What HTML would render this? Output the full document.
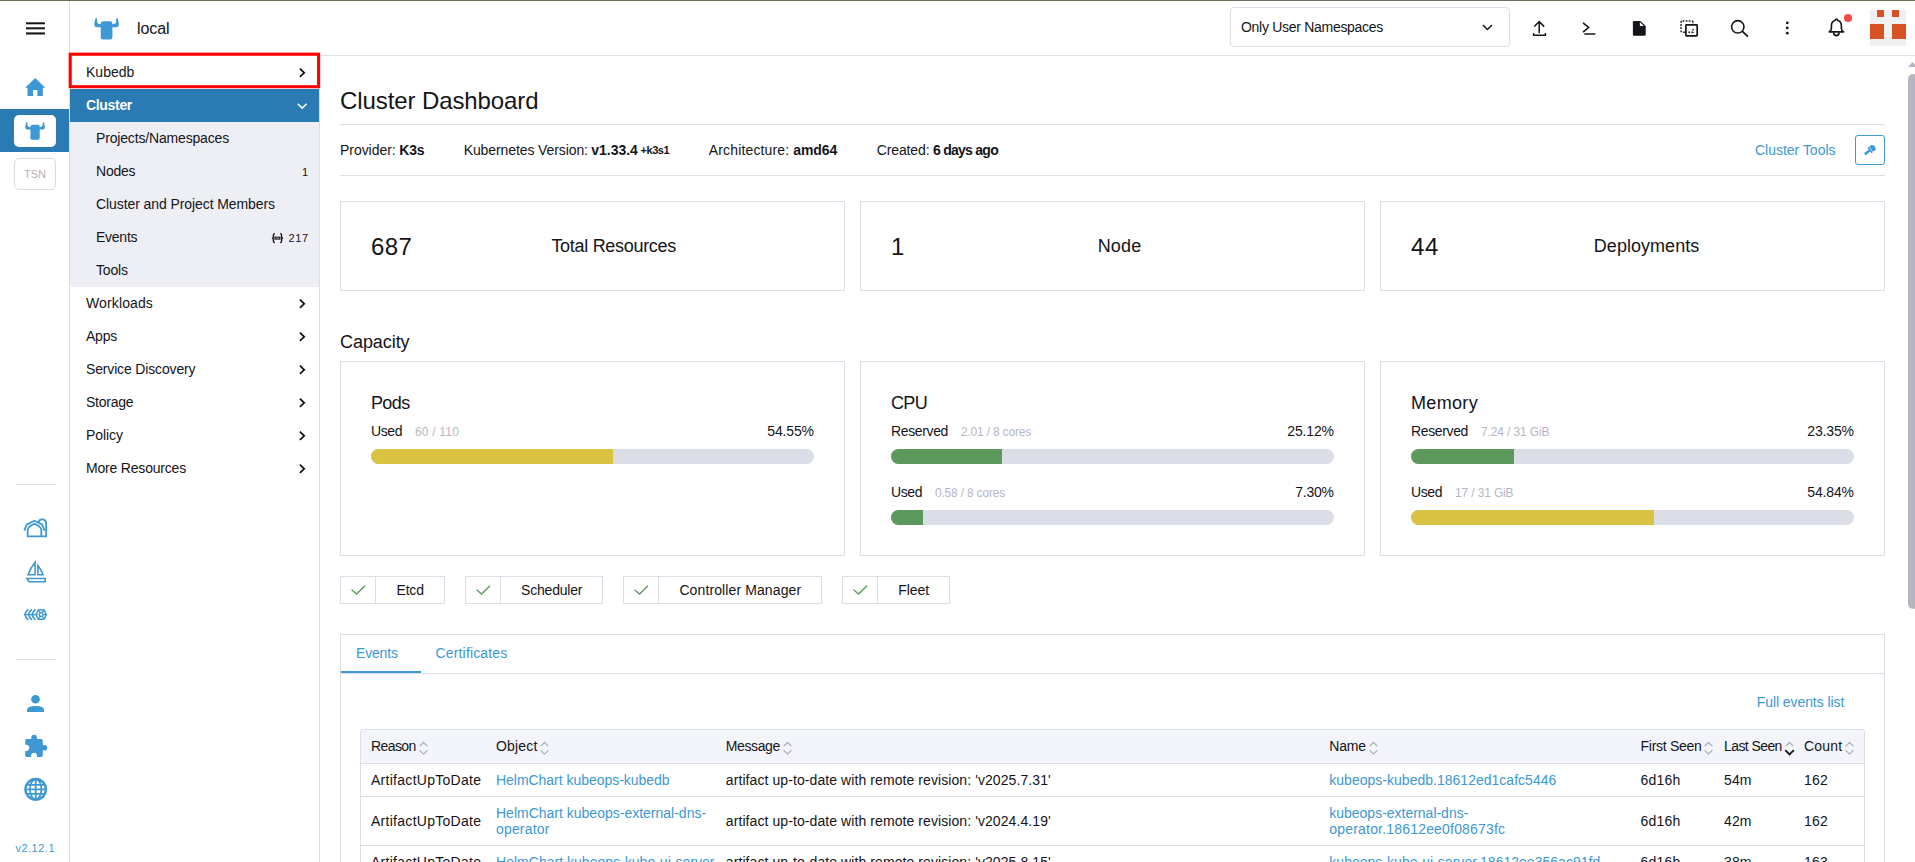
<!DOCTYPE html>
<html lang="en">
<head>
<meta charset="utf-8">
<title>Rancher - local - Cluster Dashboard</title>
<style>
html,body{margin:0;padding:0;background:#fff;}
body{width:1915px;height:862px;overflow:hidden;font-family:"Liberation Sans",sans-serif;color:#141419;}
#app{position:relative;width:1915px;height:862px;overflow:hidden;background:#fff;}
.a{position:absolute;box-sizing:border-box;}
.t{position:absolute;white-space:pre;line-height:1;margin:0;padding:0;font-weight:400;}
a.t{color:inherit;text-decoration:none;}
.card{position:absolute;box-sizing:border-box;border:1px solid #dcdee7;background:#fff;}
.bar{position:absolute;height:15px;border-radius:8px;background:#dcdee7;overflow:hidden;}
.bar i{position:absolute;left:0;top:0;bottom:0;display:block;}
.hr{position:absolute;height:1px;background:#dcdee7;}
.vr{position:absolute;width:1px;background:#dcdee7;}
svg{position:absolute;overflow:visible;}
</style>
</head>
<body>
<div id="app">
<div class="a" style="left:0;top:0;width:1915px;height:1px;background:#6b6c5a"></div>
<aside aria-label="Main menu">
<div class="vr" style="left:69px;top:1px;height:861px"></div>
<svg style="left:0;top:0" width="60" height="50"><g fill="#141419"><rect x="26" y="22.3" width="18.9" height="2"/><rect x="26" y="27.3" width="18.9" height="2"/><rect x="26" y="32.4" width="18.9" height="2.1"/></g></svg>
<svg style="left:25.3px;top:77.6px" width="20.4" height="18.1" viewBox="0 0 20 18"><path fill="#3d98d3" d="M10 0 L20 9.6 L17.6 9.6 L17.6 18 L12.2 18 L12.2 12 L7.8 12 L7.8 18 L2.4 18 L2.4 9.6 L0 9.6 Z"/></svg>
<div class="a" style="left:0;top:109px;width:69px;height:42.5px;background:#2a7bb3"></div>
<div class="a" style="left:14px;top:115px;width:42px;height:32px;background:#fff;border-radius:5px"></div>
<svg style="left:24.9px;top:122px" width="20.1" height="17.8" viewBox="0 0 25.3 21.6" preserveAspectRatio="none"><path fill="#3d98d3" d="M1.6 0 L3 0.5 L3.1 4 Q3.3 6 6.8 6.3 L6.8 5.6 Q6.8 3.2 9.3 3.2 L16 3.2 Q18.5 3.2 18.5 5.6 L18.5 6.3 Q22 6 22.2 4 L22.3 0.5 L23.7 0 Q25 4 25 6.8 Q25 9.2 22.6 9.2 L18.5 9.2 L18.5 19.4 Q18.5 21.6 16.3 21.6 L9 21.6 Q6.8 21.6 6.8 19.4 L6.8 9.2 L2.7 9.2 Q0.3 9.2 0.3 6.8 Q0.3 4 1.6 0 Z"/></svg>
<div class="a" style="left:14px;top:158px;width:42px;height:32px;border:1px solid #dcdcdc;border-radius:5px"></div>
<span class="t" style="top:168.69px;font-size:11px;left:24.00px;color:#b4b4b4;">TSN</span>
<div class="hr" style="left:16px;top:484px;width:40px"></div>
<div class="hr" style="left:16px;top:659px;width:40px"></div>
<svg style="left:20px;top:512px" width="32" height="32" viewBox="0 0 32 32" fill="none" stroke="#3d98d3" stroke-width="1.8" stroke-linejoin="round" stroke-linecap="round"><path d="M18.5 10 A3.9 3.9 0 0 1 26.1 11.2 L26.1 24.4 L7.7 24.4 L7.7 17.6 Q8.6 13.8 14.5 11.8 Q20.4 13.8 21.3 17.6 L21.3 24.4"/><path d="M4.5 18 L6.9 12.4 L14.5 8.8 L22 12.4 L24.3 18"/></svg>
<svg style="left:20px;top:555px" width="32" height="32" viewBox="0 0 32 32" fill="none" stroke="#3d98d3" stroke-width="1.6" stroke-linejoin="miter"><path d="M15.1 7.3 L15.1 19.8 L8.1 19.8 Q10.6 12.6 15.1 7.3 Z"/><path d="M17.9 10.6 L17.9 19.8 L23 19.8 Q21.4 15 17.9 10.6 Z"/><path d="M6.9 23.5 L25.2 23.5 L25.2 26.8 L9 26.8 Z"/></svg>
<svg style="left:24.2px;top:608.8px" width="23.1" height="11.2" viewBox="0 0 23.1 11.2" fill="none" stroke="#3d98d3" stroke-width="1.7" stroke-linecap="round" stroke-linejoin="round"><path d="M3.7 0.9 Q1.9 2.2 0.9 5.6 Q1.9 9 3.7 10.3 M7.3 0.9 Q5.5 2.2 4.5 5.6 Q5.5 9 7.3 10.3 M10.9 0.9 Q9.1 2.2 8.1 5.6 Q9.1 9 10.9 10.3"/><path stroke-width="1.4" d="M0.9 5.6 L13 5.6"/><path stroke-width="1.5" d="M14.4 0.9 L20 0.9 L22.3 5.6 L20 10.3 L14.4 10.3 L12 5.6 Z"/><circle cx="17.2" cy="5.6" r="1.9" stroke-width="1.3"/><path stroke-width="1.2" d="M14.4 0.9 L16.2 3.9 M20 0.9 L18.2 3.9 M14.4 10.3 L16.2 7.3 M20 10.3 L18.2 7.3 M19.2 5.6 L22.3 5.6"/></svg>
<svg style="left:27px;top:695px" width="17" height="17" viewBox="0 0 17 17"><circle cx="8.5" cy="4.3" r="4.3" fill="#3d98d3"/><path fill="#3d98d3" d="M0 17 L0 15 Q0 11 8.5 11 Q17 11 17 15 L17 17 Z"/></svg>
<svg style="left:20px;top:730px" width="32" height="32" viewBox="0 0 32 32"><g fill="#3d98d3"><rect x="5.2" y="8.9" width="17.6" height="18" rx="1.7"/><circle cx="14.1" cy="7.5" r="2.8"/><rect x="11.9" y="7.5" width="4.4" height="2"/><circle cx="24.4" cy="17.8" r="2.8"/><rect x="22" y="15.6" width="2.4" height="4.4"/></g><g fill="#ffffff"><circle cx="6.2" cy="17.8" r="3.1"/><rect x="4.8" y="14.7" width="1.4" height="6.2"/><circle cx="14.1" cy="25.6" r="2.9"/><rect x="11.2" y="25.6" width="5.8" height="1.6"/></g></svg>
<svg style="left:20px;top:773px" width="32" height="32" viewBox="0 0 32 32" fill="none" stroke="#3d98d3"><circle cx="15.7" cy="16.3" r="10.25" stroke-width="2.4"/><ellipse cx="15.7" cy="16.3" rx="5.7" ry="10.2" stroke-width="1.8"/><path stroke-width="1.8" d="M15.7 6 L15.7 26.6 M5.6 16.3 L25.8 16.3 M6.6 11.8 L24.8 11.8 M6.6 20.9 L24.8 20.9"/></svg>
<a href="#" class="t" style="top:842.59px;font-size:11px;left:15.45px;letter-spacing:0.501px;color:#3d98d3;">v2.12.1</a>
</aside>
<header>
<div class="hr" style="left:70px;top:55px;width:1845px"></div>
<svg style="left:93.8px;top:17.6px" width="25.2" height="21.5" viewBox="0 0 25.3 21.6" preserveAspectRatio="none"><path fill="#3d98d3" d="M1.6 0 L3 0.5 L3.1 4 Q3.3 6 6.8 6.3 L6.8 5.6 Q6.8 3.2 9.3 3.2 L16 3.2 Q18.5 3.2 18.5 5.6 L18.5 6.3 Q22 6 22.2 4 L22.3 0.5 L23.7 0 Q25 4 25 6.8 Q25 9.2 22.6 9.2 L18.5 9.2 L18.5 19.4 Q18.5 21.6 16.3 21.6 L9 21.6 Q6.8 21.6 6.8 19.4 L6.8 9.2 L2.7 9.2 Q0.3 9.2 0.3 6.8 Q0.3 4 1.6 0 Z"/></svg>
<span class="t" style="top:21.16px;font-size:16px;left:137.00px;letter-spacing:-0.061px;">local</span>
<div class="a" style="left:1230px;top:7px;width:280px;height:40px;border:1px solid #dcdee7;border-radius:4px"></div>
<span class="t" style="top:20.15px;font-size:14px;left:1241.00px;letter-spacing:-0.291px;">Only User Namespaces</span>
<svg style="left:1481.6px;top:23.7px" width="10.9" height="6.5" viewBox="0 0 12 7" fill="none" stroke="#141419" stroke-width="1.7"><path d="M1 1 L6 6 L11 1"/></svg>
<svg style="left:1530px;top:18px" width="20" height="20" viewBox="0 0 20 20" fill="none" stroke="#141419" stroke-width="1.5"><path d="M9.2 15.2 L9.2 4 M4.3 8.6 L9.2 3.6 L14.2 8.6 M3.6 15 L3.6 17.2 L15.4 17.2 L15.4 15"/></svg>
<svg style="left:1580px;top:18px" width="20" height="20" viewBox="0 0 20 20" fill="none" stroke="#141419" stroke-width="1.6"><path d="M3 4.8 L8.6 9.5 L3 14.2"/><path stroke-width="1.5" d="M4.3 16 L15.3 16"/></svg>
<svg style="left:1630px;top:18px" width="20" height="20" viewBox="0 0 20 20"><path fill="#141419" d="M4.1 3 L10.2 3 L15.7 8 L15.7 16.5 Q15.7 17.7 14.5 17.7 L4.1 17.7 Q2.9 17.7 2.9 16.5 L2.9 4.2 Q2.9 3 4.1 3 Z"/><path fill="#ffffff" d="M9.9 4.3 L9.9 7.9 L13.9 7.9 Z"/></svg>
<svg style="left:1678px;top:18px" width="22" height="20" viewBox="0 0 22 20" fill="none" stroke="#141419"><rect x="3" y="2.9" width="12" height="11.3" rx="1.6" stroke-width="1.5" stroke-dasharray="1.7 1.4"/><rect x="7.9" y="6.8" width="11.3" height="11" rx="0.6" stroke-width="1.7" fill="#ffffff"/><path stroke-width="1.4" stroke-dasharray="1.6 1.5" d="M10.4 14.2 L15 14.2 L15 10"/></svg>
<svg style="left:1728px;top:18px" width="22" height="20" viewBox="0 0 22 20" fill="none" stroke="#141419" stroke-width="1.6"><circle cx="9.8" cy="8.85" r="6.2"/><path stroke-width="1.7" d="M14.2 13.1 L19.9 18.7"/></svg>
<svg style="left:1785px;top:20px" width="5" height="16" viewBox="0 0 5 16"><circle cx="2.3" cy="2.9" r="1.35" fill="#141419"/><circle cx="2.3" cy="7.9" r="1.35" fill="#141419"/><circle cx="2.3" cy="13.2" r="1.35" fill="#141419"/></svg>
<svg style="left:1827.9px;top:18.4px" width="16.8" height="18.6" viewBox="0 0 16.8 18.6" fill="none" stroke="#141419" stroke-width="1.6" stroke-linejoin="round"><path d="M8.4 1 Q9.4 1 9.6 2.3 Q13.4 3.4 13.4 8 L13.4 10.6 Q13.6 12.4 15.6 13.9 L1.2 13.9 Q3.2 12.4 3.4 10.6 L3.4 8 Q3.4 3.4 7.2 2.3 Q7.4 1 8.4 1 Z"/><path d="M5.6 14.4 Q5.8 17.6 8.4 17.6 Q11 17.6 11.2 14.4"/></svg>
<div class="a" style="left:1844px;top:14px;width:8px;height:8px;border-radius:4px;background:#f64747"></div>
<div class="a" style="left:1870px;top:10px;width:36px;height:36px;background:#f0f0f0"></div>
<div class="a" style="left:1877.2px;top:10px;width:7.2px;height:7.2px;background:#d65224"></div>
<div class="a" style="left:1891.6px;top:10px;width:7.2px;height:7.2px;background:#d65224"></div>
<div class="a" style="left:1870px;top:24.4px;width:14.4px;height:14.4px;background:#d65224"></div>
<div class="a" style="left:1891.6px;top:24.4px;width:14.4px;height:14.4px;background:#d65224"></div>
</header>
<nav aria-label="Cluster navigation">
<div class="vr" style="left:319px;top:56px;height:806px"></div>
<div class="a" style="left:70px;top:88.5px;width:249px;height:33px;background:#2a7bb3"></div>
<div class="a" style="left:70px;top:121.5px;width:249px;height:165px;background:#eeeff4"></div>
<svg style="left:0;top:0" width="330" height="95"><rect x="70.2" y="54.2" width="248.4" height="32.5" fill="none" stroke="#ff0000" stroke-width="3.1"/></svg>
<a href="#" class="t" style="top:65.15px;font-size:14px;left:86.00px;letter-spacing:0.020px;">Kubedb</a>
<a href="#" class="t" style="top:98.15px;font-size:14px;left:86.00px;letter-spacing:-0.319px;font-weight:700;color:#ffffff;">Cluster</a>
<a href="#" class="t" style="top:131.15px;font-size:14px;left:96.00px;letter-spacing:-0.167px;">Projects/Namespaces</a>
<a href="#" class="t" style="top:164.15px;font-size:14px;left:96.00px;letter-spacing:-0.214px;">Nodes</a>
<span class="t" style="top:166.59px;font-size:11px;left:301.88px;letter-spacing:-0.132px;">1</span>
<a href="#" class="t" style="top:197.15px;font-size:14px;left:96.00px;letter-spacing:-0.085px;">Cluster and Project Members</a>
<a href="#" class="t" style="top:230.15px;font-size:14px;left:96.00px;letter-spacing:-0.252px;">Events</a>
<span class="t" style="top:232.59px;font-size:11px;left:288.54px;letter-spacing:0.600px;">217</span>
<svg style="left:270.6px;top:232.7px" width="13" height="10.3" viewBox="0 0 11.9 10.1" preserveAspectRatio="none" fill="none" stroke="#141419" stroke-width="1.25"><path d="M3.6 0.6 Q2.2 0.6 2.2 2 L2.2 3.9 Q2.2 5.05 0.8 5.05 Q2.2 5.05 2.2 6.2 L2.2 8.1 Q2.2 9.5 3.6 9.5 M8.3 0.6 Q9.7 0.6 9.7 2 L9.7 3.9 Q9.7 5.05 11.1 5.05 Q9.7 5.05 9.7 6.2 L9.7 8.1 Q9.7 9.5 8.3 9.5"/><rect x="3.7" y="4.15" width="4.5" height="1.8" stroke-width="1.1"/></svg>
<a href="#" class="t" style="top:263.15px;font-size:14px;left:96.00px;letter-spacing:-0.177px;">Tools</a>
<a href="#" class="t" style="top:296.15px;font-size:14px;left:86.00px;letter-spacing:0.123px;">Workloads</a>
<a href="#" class="t" style="top:329.15px;font-size:14px;left:86.00px;letter-spacing:-0.230px;">Apps</a>
<a href="#" class="t" style="top:362.15px;font-size:14px;left:86.00px;letter-spacing:-0.155px;">Service Discovery</a>
<a href="#" class="t" style="top:395.15px;font-size:14px;left:86.00px;letter-spacing:-0.235px;">Storage</a>
<a href="#" class="t" style="top:428.15px;font-size:14px;left:86.00px;letter-spacing:-0.060px;">Policy</a>
<a href="#" class="t" style="top:461.15px;font-size:14px;left:86.00px;letter-spacing:-0.193px;">More Resources</a>
<svg style="left:298.6px;top:68.4px" width="6.4" height="9.6" viewBox="0 0 6.4 9.6" fill="none" stroke="#141419" stroke-width="1.8"><path d="M0.9 0.7 L5.2 4.8 L0.9 8.9"/></svg>
<svg style="left:298.6px;top:299.4px" width="6.4" height="9.6" viewBox="0 0 6.4 9.6" fill="none" stroke="#141419" stroke-width="1.8"><path d="M0.9 0.7 L5.2 4.8 L0.9 8.9"/></svg>
<svg style="left:298.6px;top:332.4px" width="6.4" height="9.6" viewBox="0 0 6.4 9.6" fill="none" stroke="#141419" stroke-width="1.8"><path d="M0.9 0.7 L5.2 4.8 L0.9 8.9"/></svg>
<svg style="left:298.6px;top:365.4px" width="6.4" height="9.6" viewBox="0 0 6.4 9.6" fill="none" stroke="#141419" stroke-width="1.8"><path d="M0.9 0.7 L5.2 4.8 L0.9 8.9"/></svg>
<svg style="left:298.6px;top:398.4px" width="6.4" height="9.6" viewBox="0 0 6.4 9.6" fill="none" stroke="#141419" stroke-width="1.8"><path d="M0.9 0.7 L5.2 4.8 L0.9 8.9"/></svg>
<svg style="left:298.6px;top:431.4px" width="6.4" height="9.6" viewBox="0 0 6.4 9.6" fill="none" stroke="#141419" stroke-width="1.8"><path d="M0.9 0.7 L5.2 4.8 L0.9 8.9"/></svg>
<svg style="left:298.6px;top:464.4px" width="6.4" height="9.6" viewBox="0 0 6.4 9.6" fill="none" stroke="#141419" stroke-width="1.8"><path d="M0.9 0.7 L5.2 4.8 L0.9 8.9"/></svg>
<svg style="left:296.7px;top:102.9px" width="10.4" height="6.2" viewBox="0 0 10.4 6.2" fill="none" stroke="#ffffff" stroke-width="1.5"><path d="M0.7 0.7 L5.2 5.1 L9.7 0.7"/></svg>
</nav>
<main>
<h1 class="t" style="top:88.98px;font-size:24px;left:340.00px;letter-spacing:-0.095px;">Cluster Dashboard</h1>
<div class="hr" style="left:340px;top:124px;width:1545px"></div>
<span class="t" style="top:142.95px;font-size:14px;left:340.00px;letter-spacing:-0.042px;">Provider: </span>
<span class="t" style="top:142.95px;font-size:14px;left:399.30px;letter-spacing:-0.229px;font-weight:700;">K3s</span>
<span class="t" style="top:142.95px;font-size:14px;left:463.70px;letter-spacing:-0.099px;">Kubernetes Version: </span>
<span class="t" style="top:142.95px;font-size:14px;left:591.30px;letter-spacing:-0.017px;font-weight:700;">v1.33.4</span>
<span class="t" style="top:145.49px;font-size:11px;left:640.60px;letter-spacing:-0.461px;font-weight:700;">+k3s1</span>
<span class="t" style="top:142.95px;font-size:14px;left:708.80px;letter-spacing:0.144px;">Architecture: </span>
<span class="t" style="top:142.95px;font-size:14px;left:793.20px;letter-spacing:-0.072px;font-weight:700;">amd64</span>
<span class="t" style="top:142.95px;font-size:14px;left:876.80px;letter-spacing:-0.133px;">Created: </span>
<span class="t" style="top:142.95px;font-size:14px;left:933.00px;letter-spacing:-0.738px;font-weight:700;">6 days ago</span>
<div class="hr" style="left:340px;top:175px;width:1545px"></div>
<a href="#" class="t" style="top:142.95px;font-size:14px;left:1755.00px;letter-spacing:-0.013px;color:#3d98d3;">Cluster Tools</a>
<div class="a" style="left:1855px;top:135px;width:30px;height:30px;border:1px solid #3d98d3;border-radius:3px"></div>
<svg style="left:1855px;top:135px" width="30" height="30" viewBox="0 0 30 30"><g fill="#3d98d3" transform="translate(10.7 18.5) rotate(-38)"><path d="M0.3 -1.5 Q-1.4 -1.5 -1.4 0 Q-1.4 1.5 0.3 1.5 L5 1 L5 -1 Z"/><rect x="4.7" y="-3.3" width="1.7" height="6.6"/><path d="M6.9 -3.3 L9.6 -3.3 Q10.4 -1.6 12 -1.2 Q10.8 1.4 10.6 3.3 L6.9 3.3 Z"/></g></svg>
<section aria-label="Resource counts">
<div class="card" style="left:340px;top:201px;width:505px;height:90px"></div>
<span class="t" style="top:234.98px;font-size:24px;left:371.00px;letter-spacing:0.418px;">687</span>
<span class="t" style="top:236.76px;font-size:18px;left:551.40px;letter-spacing:-0.298px;">Total Resources</span>
<div class="card" style="left:860px;top:201px;width:505px;height:90px"></div>
<span class="t" style="top:234.98px;font-size:24px;left:891.00px;letter-spacing:-0.288px;">1</span>
<span class="t" style="top:236.76px;font-size:18px;left:1097.70px;letter-spacing:0.142px;">Node</span>
<div class="card" style="left:1380px;top:201px;width:505px;height:90px"></div>
<span class="t" style="top:234.98px;font-size:24px;left:1411.00px;letter-spacing:0.600px;">44</span>
<span class="t" style="top:236.76px;font-size:18px;left:1593.80px;letter-spacing:0.041px;">Deployments</span>
</section>
<section aria-label="Capacity">
<h2 class="t" style="top:332.76px;font-size:18px;left:340.00px;letter-spacing:-0.066px;">Capacity</h2>
<div class="card" style="left:340px;top:361px;width:505px;height:195px"></div>
<h3 class="t" style="top:394.16px;font-size:18px;left:371.00px;letter-spacing:-0.633px;">Pods</h3>
<span class="t" style="top:424.15px;font-size:14px;left:371.00px;letter-spacing:-0.422px;">Used</span>
<span class="t" style="top:425.84px;font-size:12px;left:415.00px;letter-spacing:0.189px;color:#b6b6c2;">60 / 110</span>
<span class="t" style="top:424.15px;font-size:14px;left:767.34px;letter-spacing:-0.164px;">54.55%</span>
<div class="bar" style="left:371px;top:449px;width:443px"><i style="width:241.7px;background:#dac342"></i></div>
<div class="card" style="left:860px;top:361px;width:505px;height:195px"></div>
<h3 class="t" style="top:394.16px;font-size:18px;left:891.00px;letter-spacing:-0.672px;">CPU</h3>
<span class="t" style="top:424.15px;font-size:14px;left:891.00px;letter-spacing:-0.365px;">Reserved</span>
<span class="t" style="top:425.84px;font-size:12px;left:961.00px;letter-spacing:-0.194px;color:#b6b6c2;">2.01 / 8 cores</span>
<span class="t" style="top:424.15px;font-size:14px;left:1287.34px;letter-spacing:-0.164px;">25.12%</span>
<div class="bar" style="left:891px;top:449px;width:443px"><i style="width:111px;background:#5d995d"></i></div>
<span class="t" style="top:485.15px;font-size:14px;left:891.00px;letter-spacing:-0.422px;">Used</span>
<span class="t" style="top:486.84px;font-size:12px;left:935.00px;letter-spacing:-0.194px;color:#b6b6c2;">0.58 / 8 cores</span>
<span class="t" style="top:485.15px;font-size:14px;left:1295.26px;letter-spacing:-0.241px;">7.30%</span>
<div class="bar" style="left:891px;top:510px;width:443px"><i style="width:32px;background:#5d995d"></i></div>
<div class="card" style="left:1380px;top:361px;width:505px;height:195px"></div>
<h3 class="t" style="top:394.16px;font-size:18px;left:1411.00px;letter-spacing:0.331px;">Memory</h3>
<span class="t" style="top:424.15px;font-size:14px;left:1411.00px;letter-spacing:-0.365px;">Reserved</span>
<span class="t" style="top:425.84px;font-size:12px;left:1481.00px;letter-spacing:-0.119px;color:#b6b6c2;">7.24 / 31 GiB</span>
<span class="t" style="top:424.15px;font-size:14px;left:1807.34px;letter-spacing:-0.164px;">23.35%</span>
<div class="bar" style="left:1411px;top:449px;width:443px"><i style="width:103px;background:#5d995d"></i></div>
<span class="t" style="top:485.15px;font-size:14px;left:1411.00px;letter-spacing:-0.422px;">Used</span>
<span class="t" style="top:486.84px;font-size:12px;left:1455.00px;letter-spacing:-0.141px;color:#b6b6c2;">17 / 31 GiB</span>
<span class="t" style="top:485.15px;font-size:14px;left:1807.34px;letter-spacing:-0.164px;">54.84%</span>
<div class="bar" style="left:1411px;top:510px;width:443px"><i style="width:243px;background:#dac342"></i></div>
</section>
<section aria-label="Component status">
<div class="card" style="left:340px;top:576px;width:105px;height:28px"></div>
<div class="vr" style="left:375px;top:577px;height:26px"></div>
<svg style="left:350.6px;top:585px" width="14.6" height="10" viewBox="0 0 14.6 10" fill="none" stroke="#5d995d" stroke-width="1.4"><path d="M0.6 4.8 L5.6 9 L14 0.8"/></svg>
<span class="t" style="top:582.85px;font-size:14px;left:396.55px;letter-spacing:-0.204px;">Etcd</span>
<div class="card" style="left:465px;top:576px;width:138px;height:28px"></div>
<div class="vr" style="left:500px;top:577px;height:26px"></div>
<svg style="left:475.6px;top:585px" width="14.6" height="10" viewBox="0 0 14.6 10" fill="none" stroke="#5d995d" stroke-width="1.4"><path d="M0.6 4.8 L5.6 9 L14 0.8"/></svg>
<span class="t" style="top:582.85px;font-size:14px;left:521.05px;letter-spacing:-0.205px;">Scheduler</span>
<div class="card" style="left:623px;top:576px;width:199px;height:28px"></div>
<div class="vr" style="left:658px;top:577px;height:26px"></div>
<svg style="left:633.6px;top:585px" width="14.6" height="10" viewBox="0 0 14.6 10" fill="none" stroke="#5d995d" stroke-width="1.4"><path d="M0.6 4.8 L5.6 9 L14 0.8"/></svg>
<span class="t" style="top:582.85px;font-size:14px;left:679.40px;letter-spacing:0.109px;">Controller Manager</span>
<div class="card" style="left:842px;top:576px;width:108px;height:28px"></div>
<div class="vr" style="left:877px;top:577px;height:26px"></div>
<svg style="left:852.6px;top:585px" width="14.6" height="10" viewBox="0 0 14.6 10" fill="none" stroke="#5d995d" stroke-width="1.4"><path d="M0.6 4.8 L5.6 9 L14 0.8"/></svg>
<span class="t" style="top:582.85px;font-size:14px;left:898.24px;letter-spacing:-0.025px;">Fleet</span>
</section>
<section aria-label="Events and certificates">
<div class="card" style="left:340px;top:634px;width:1545px;height:260px;border-bottom:none"></div>
<div class="hr" style="left:341px;top:673px;width:1543px"></div>
<div class="a" style="left:341px;top:671px;width:80px;height:2px;background:#3d98d3"></div>
<a href="#" class="t" style="top:645.95px;font-size:14px;left:356.00px;letter-spacing:-0.169px;color:#3d98d3;">Events</a>
<a href="#" class="t" style="top:645.95px;font-size:14px;left:435.50px;letter-spacing:0.164px;color:#3d98d3;">Certificates</a>
<a href="#" class="t" style="top:694.85px;font-size:14px;left:1756.72px;letter-spacing:-0.075px;color:#3d98d3;">Full events list</a>
<div class="a" style="left:360px;top:729px;width:1505px;height:160px;border:1px solid #dcdee7;border-radius:4px 4px 0 0;border-bottom:none"></div>
<div class="a" style="left:361px;top:730px;width:1503px;height:33px;background:#f4f5fa;border-radius:3px 3px 0 0"></div>
<div class="hr" style="left:361px;top:763px;width:1503px"></div>
<div class="hr" style="left:361px;top:796px;width:1503px"></div>
<div class="hr" style="left:361px;top:845px;width:1503px"></div>
<span class="t" style="top:738.75px;font-size:14px;left:371.00px;letter-spacing:-0.578px;">Reason</span>
<svg style="left:418.6px;top:740.5px" width="9" height="15" viewBox="0 0 9 15" fill="none"><path stroke="#a6a6b2" stroke-width="1.1" d="M0.6 5.2 L4.5 1.5 L8.4 5.2"/><path stroke="#a6a6b2" stroke-width="1.1" d="M0.6 9.4 L4.5 13.1 L8.4 9.4"/></svg>
<span class="t" style="top:738.75px;font-size:14px;left:496.00px;letter-spacing:0.172px;">Object</span>
<svg style="left:540.3px;top:740.5px" width="9" height="15" viewBox="0 0 9 15" fill="none"><path stroke="#a6a6b2" stroke-width="1.1" d="M0.6 5.2 L4.5 1.5 L8.4 5.2"/><path stroke="#a6a6b2" stroke-width="1.1" d="M0.6 9.4 L4.5 13.1 L8.4 9.4"/></svg>
<span class="t" style="top:738.75px;font-size:14px;left:725.80px;letter-spacing:-0.402px;">Message</span>
<svg style="left:782.5999999999999px;top:740.5px" width="9" height="15" viewBox="0 0 9 15" fill="none"><path stroke="#a6a6b2" stroke-width="1.1" d="M0.6 5.2 L4.5 1.5 L8.4 5.2"/><path stroke="#a6a6b2" stroke-width="1.1" d="M0.6 9.4 L4.5 13.1 L8.4 9.4"/></svg>
<span class="t" style="top:738.75px;font-size:14px;left:1329.30px;letter-spacing:-0.215px;">Name</span>
<svg style="left:1368.6px;top:740.5px" width="9" height="15" viewBox="0 0 9 15" fill="none"><path stroke="#a6a6b2" stroke-width="1.1" d="M0.6 5.2 L4.5 1.5 L8.4 5.2"/><path stroke="#a6a6b2" stroke-width="1.1" d="M0.6 9.4 L4.5 13.1 L8.4 9.4"/></svg>
<span class="t" style="top:738.75px;font-size:14px;left:1640.60px;letter-spacing:-0.281px;">First Seen</span>
<svg style="left:1704.3999999999999px;top:740.5px" width="9" height="15" viewBox="0 0 9 15" fill="none"><path stroke="#a6a6b2" stroke-width="1.1" d="M0.6 5.2 L4.5 1.5 L8.4 5.2"/><path stroke="#a6a6b2" stroke-width="1.1" d="M0.6 9.4 L4.5 13.1 L8.4 9.4"/></svg>
<span class="t" style="top:738.75px;font-size:14px;left:1724.00px;letter-spacing:-0.585px;">Last Seen</span>
<svg style="left:1785.0px;top:740.5px" width="9" height="15" viewBox="0 0 9 15" fill="none"><path stroke="#a6a6b2" stroke-width="1.1" d="M0.6 5.2 L4.5 1.5 L8.4 5.2"/><path stroke="#141419" stroke-width="1.8" d="M0.2 9.2 L4.5 13.4 L8.8 9.2"/></svg>
<span class="t" style="top:738.75px;font-size:14px;left:1804.00px;letter-spacing:0.188px;">Count</span>
<svg style="left:1845.1px;top:740.5px" width="9" height="15" viewBox="0 0 9 15" fill="none"><path stroke="#a6a6b2" stroke-width="1.1" d="M0.6 5.2 L4.5 1.5 L8.4 5.2"/><path stroke="#a6a6b2" stroke-width="1.1" d="M0.6 9.4 L4.5 13.1 L8.4 9.4"/></svg>
<span class="t" style="top:772.85px;font-size:14px;left:371.00px;letter-spacing:0.279px;">ArtifactUpToDate</span>
<a href="#" class="t" style="top:772.85px;font-size:14px;left:496.00px;letter-spacing:-0.035px;color:#3d98d3;">HelmChart kubeops-kubedb</a>
<span class="t" style="top:772.85px;font-size:14px;left:725.80px;letter-spacing:0.083px;">artifact up-to-date with remote revision: 'v2025.7.31'</span>
<a href="#" class="t" style="top:772.85px;font-size:14px;left:1329.30px;letter-spacing:0.015px;color:#3d98d3;">kubeops-kubedb.18612ed1cafc5446</a>
<span class="t" style="top:772.85px;font-size:14px;left:1640.60px;letter-spacing:0.212px;">6d16h</span>
<span class="t" style="top:772.85px;font-size:14px;left:1724.00px;letter-spacing:0.122px;">54m</span>
<span class="t" style="top:772.85px;font-size:14px;left:1804.00px;letter-spacing:0.214px;">162</span>
<span class="t" style="top:813.85px;font-size:14px;left:371.00px;letter-spacing:0.279px;">ArtifactUpToDate</span>
<a href="#" class="t" style="top:805.85px;font-size:14px;left:496.00px;color:#3d98d3;">HelmChart kubeops-external-dns-</a>
<a href="#" class="t" style="top:821.85px;font-size:14px;left:496.00px;letter-spacing:0.168px;color:#3d98d3;">operator</a>
<span class="t" style="top:813.85px;font-size:14px;left:725.80px;letter-spacing:0.083px;">artifact up-to-date with remote revision: 'v2024.4.19'</span>
<a href="#" class="t" style="top:805.85px;font-size:14px;left:1329.30px;letter-spacing:-0.014px;color:#3d98d3;">kubeops-external-dns-</a>
<a href="#" class="t" style="top:821.85px;font-size:14px;left:1329.30px;letter-spacing:0.189px;color:#3d98d3;">operator.18612ee0f08673fc</a>
<span class="t" style="top:813.85px;font-size:14px;left:1640.60px;letter-spacing:0.212px;">6d16h</span>
<span class="t" style="top:813.85px;font-size:14px;left:1724.00px;letter-spacing:0.122px;">42m</span>
<span class="t" style="top:813.85px;font-size:14px;left:1804.00px;letter-spacing:0.214px;">162</span>
<span class="t" style="top:854.85px;font-size:14px;left:371.00px;letter-spacing:0.279px;">ArtifactUpToDate</span>
<a href="#" class="t" style="top:854.85px;font-size:14px;left:496.00px;letter-spacing:0.020px;color:#3d98d3;">HelmChart kubeops-kube-ui-server</a>
<span class="t" style="top:854.85px;font-size:14px;left:725.80px;letter-spacing:0.083px;">artifact up-to-date with remote revision: 'v2025.8.15'</span>
<a href="#" class="t" style="top:854.85px;font-size:14px;left:1329.30px;letter-spacing:0.023px;color:#3d98d3;">kubeops-kube-ui-server.18612ee356ac91fd</a>
<span class="t" style="top:854.85px;font-size:14px;left:1640.60px;letter-spacing:0.212px;">6d16h</span>
<span class="t" style="top:854.85px;font-size:14px;left:1724.00px;letter-spacing:0.122px;">38m</span>
<span class="t" style="top:854.85px;font-size:14px;left:1804.00px;letter-spacing:0.214px;">163</span>
</section>
</main>
<svg style="left:1908px;top:62px" width="9" height="5" viewBox="0 0 9 5"><path fill="#b6b6c2" d="M0 5 L4.5 0 L9 5 Z"/></svg>
<div class="a" style="left:1908px;top:74px;width:10px;height:534.5px;border-radius:5px;background:#b6b6c2"></div>
</div>
</body>
</html>
